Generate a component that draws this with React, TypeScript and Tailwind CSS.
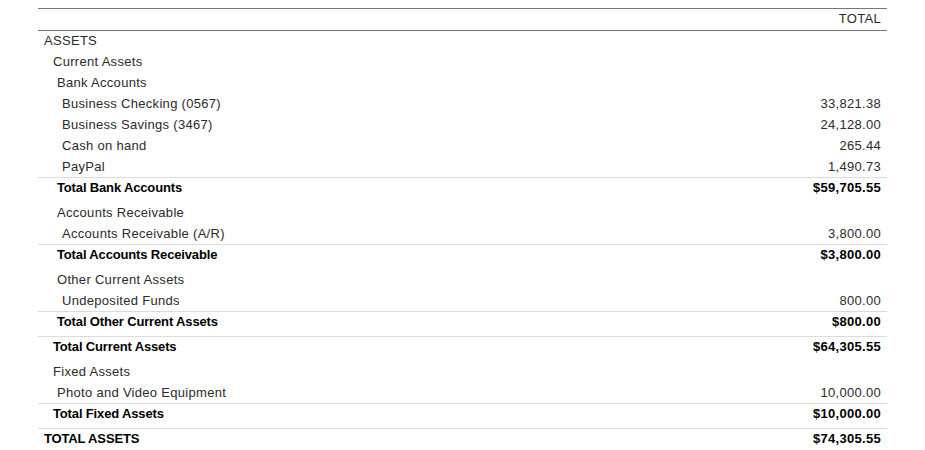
type Row = {
  label: string;
  value?: string;
  indent: string;
  total?: boolean;
  line?: boolean;
};

const rows: Row[] = [
  { label: "ASSETS", indent: "pl-[6px]" },
  { label: "Current Assets", indent: "pl-[15px]" },
  { label: "Bank Accounts", indent: "pl-[19px]" },
  { label: "Business Checking (0567)", value: "33,821.38", indent: "pl-[24px]" },
  { label: "Business Savings (3467)", value: "24,128.00", indent: "pl-[24px]" },
  { label: "Cash on hand", value: "265.44", indent: "pl-[24px]" },
  { label: "PayPal", value: "1,490.73", indent: "pl-[24px]" },
  { label: "Total Bank Accounts", value: "$59,705.55", indent: "pl-[19px]", total: true, line: true },
  { label: "Accounts Receivable", indent: "pl-[19px]" },
  { label: "Accounts Receivable (A/R)", value: "3,800.00", indent: "pl-[24px]" },
  { label: "Total Accounts Receivable", value: "$3,800.00", indent: "pl-[19px]", total: true, line: true },
  { label: "Other Current Assets", indent: "pl-[19px]" },
  { label: "Undeposited Funds", value: "800.00", indent: "pl-[24px]" },
  { label: "Total Other Current Assets", value: "$800.00", indent: "pl-[19px]", total: true, line: true },
  { label: "Total Current Assets", value: "$64,305.55", indent: "pl-[15px]", total: true, line: true },
  { label: "Fixed Assets", indent: "pl-[15px]" },
  { label: "Photo and Video Equipment", value: "10,000.00", indent: "pl-[19px]" },
  { label: "Total Fixed Assets", value: "$10,000.00", indent: "pl-[15px]", total: true, line: true },
  { label: "TOTAL ASSETS", value: "$74,305.55", indent: "pl-[6px]", total: true, line: true },
];

export default function App() {
  return (
    <div className="min-h-[450px] bg-white pt-[8px] font-['Liberation_Sans',Arial,sans-serif] text-[13px] text-[#2b2b2b]">
      <div className="ml-[38px] w-[849px]">
        <div className="flex h-[23px] items-center justify-end border-y border-[#777] pr-[6px] pb-[1px] tracking-[0.3px]">
          <span>TOTAL</span>
        </div>
        {rows.map((row, i) => (
          <div
            key={i}
            className={
              "flex items-center justify-between pr-[6px] " +
              (row.total ? "h-[25px] pb-[5px] font-bold text-black " : i === 0 ? "h-[20px] " : "h-[21px] ") +
              (row.line ? "border-t border-[#dcdcdc] " : "") +
              row.indent
            }
          >
            <span className={row.total ? "tracking-[-0.15px]" : "tracking-[0.3px]"}>{row.label}</span>
            {row.value && <span className="tracking-[0.3px]">{row.value}</span>}
          </div>
        ))}
      </div>
    </div>
  );
}
